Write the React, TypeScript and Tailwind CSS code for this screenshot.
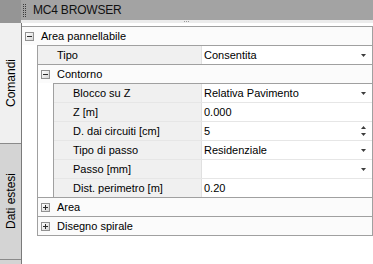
import React from 'react';

type PropItem = {
  label: string;
  value: string;
  kind?: 'select' | 'spin' | 'text';
};

const contorno: PropItem[] = [
  { label: 'Blocco su Z', value: 'Relativa Pavimento', kind: 'select' },
  { label: 'Z [m]', value: '0.000', kind: 'text' },
  { label: 'D. dai circuiti [cm]', value: '5', kind: 'spin' },
  { label: 'Tipo di passo', value: 'Residenziale', kind: 'select' },
  { label: 'Passo [mm]', value: '', kind: 'select' },
  { label: 'Dist. perimetro [m]', value: '0.20', kind: 'text' },
];

const Expander = ({ open }: { open: boolean }) => (
  <span className="relative flex h-[9px] w-[9px] shrink-0 items-center justify-center border border-[#919191] bg-linear-to-br from-white to-[#d6d6d6]">
    <span className="h-px w-[5px] bg-[#2b2b2b]" />
    {!open && <span className="absolute h-[5px] w-px bg-[#2b2b2b]" />}
  </span>
);

const DropArrow = () => (
  <svg width="5" height="3" viewBox="0 0 5 3" className="shrink-0">
    <polygon points="0,0 5,0 2.5,3" fill="#3c3c3c" />
  </svg>
);

const SpinArrows = () => (
  <svg width="5" height="10" viewBox="0 0 5 10" className="shrink-0">
    <polygon points="2.5,0 5,3 0,3" fill="#3c3c3c" />
    <polygon points="0,7 5,7 2.5,10" fill="#3c3c3c" />
  </svg>
);

const PropRow = ({ item, first }: { item: PropItem; first?: boolean }) => (
  <div className={first ? 'flex h-[18px]' : 'flex h-[19px] border-t border-[#e6e6e6]'}>
    <div className="flex flex-1 items-center bg-[#f0f0f0] pl-[19px]">{item.label}</div>
    <div className="flex w-[171px] items-center justify-between border-l border-[#e0e0e0] bg-white pl-[2px] pr-[6px]">
      <span>{item.value}</span>
      {item.kind === 'select' && <DropArrow />}
      {item.kind === 'spin' && <SpinArrows />}
    </div>
  </div>
);

const CategoryHeader = ({ label, open }: { label: string; open: boolean }) => (
  <div className="flex h-[18px] items-center bg-[#fbfbfb] pl-[3px]">
    <Expander open={open} />
    <span className="ml-[7px]">{label}</span>
  </div>
);

const Grip = () => (
  <svg width="4" height="13" viewBox="0 0 4 13">
    {[0, 2, 4, 6, 8, 10, 12].map((y) => (
      <g key={y}>
        <rect x="0" y={y} width="1" height="1" fill="#3a3a3a" />
        <rect x="2" y={y} width="1" height="1" fill="#3a3a3a" />
      </g>
    ))}
  </svg>
);

export default function App() {
  return (
    <div className="flex h-[264px] w-[373px] flex-col overflow-hidden bg-white font-['Liberation_Sans',Arial,sans-serif] text-[11px] text-black">
      <div className="flex h-[20px] shrink-0">
        <div className="w-[21px] bg-[#959595]" />
        <div className="flex flex-1 items-center bg-[#a3a3a3] pl-[2px]">
          <Grip />
          <span className="ml-[6px] text-[12px] tracking-[-0.2px] text-[#111]">MC4 BROWSER</span>
        </div>
      </div>
      <div className="flex h-[3px] shrink-0">
        <div className="w-[21px] bg-[#959595]" />
        <div className="flex flex-1 items-center bg-[#ececec] pl-[163px]">
          <div className="flex gap-px">
            <span className="h-px w-px bg-[#9a9a9a]" />
            <span className="h-px w-px bg-[#9a9a9a]" />
            <span className="h-px w-px bg-[#9a9a9a]" />
          </div>
        </div>
      </div>
      <div className="flex flex-1">
        <div className="flex w-[22px] shrink-0 flex-col border-r border-[#7a7a7a] bg-[#d4d4d4] text-[12px]">
          <div className="flex h-[121px] items-center justify-center border-b border-[#8a8a8a] bg-[#f0f0f0]">
            <span className="rotate-180 [writing-mode:vertical-rl]">Comandi</span>
          </div>
          <div className="flex h-[116px] items-center justify-center border-b border-[#8a8a8a]">
            <span className="rotate-180 [writing-mode:vertical-rl]">Dati estesi</span>
          </div>
        </div>
        <div className="flex-1 pt-[3px]">
          <div className="flex flex-col border-t border-r border-[#a0a0a0]">
            <CategoryHeader label="Area pannellabile" open />
            <div className="flex">
              <div className="w-[15px] shrink-0" />
              <div className="flex flex-1 flex-col border-t border-l border-b border-[#a0a0a0]">
                <PropRow item={{ label: 'Tipo', value: 'Consentita', kind: 'select' }} first />
                <div className="border-t border-[#a0a0a0]">
                  <CategoryHeader label="Contorno" open />
                  <div className="flex">
                    <div className="w-[15px] shrink-0" />
                    <div className="flex flex-1 flex-col border-t border-l border-[#a0a0a0]">
                      {contorno.map((item, i) => (
                        <PropRow key={item.label} item={item} first={i === 0} />
                      ))}
                    </div>
                  </div>
                </div>
                <div className="border-t border-[#a0a0a0]">
                  <CategoryHeader label="Area" open={false} />
                </div>
                <div className="border-t border-[#a0a0a0]">
                  <CategoryHeader label="Disegno spirale" open={false} />
                </div>
              </div>
            </div>
          </div>
        </div>
      </div>
    </div>
  );
}
